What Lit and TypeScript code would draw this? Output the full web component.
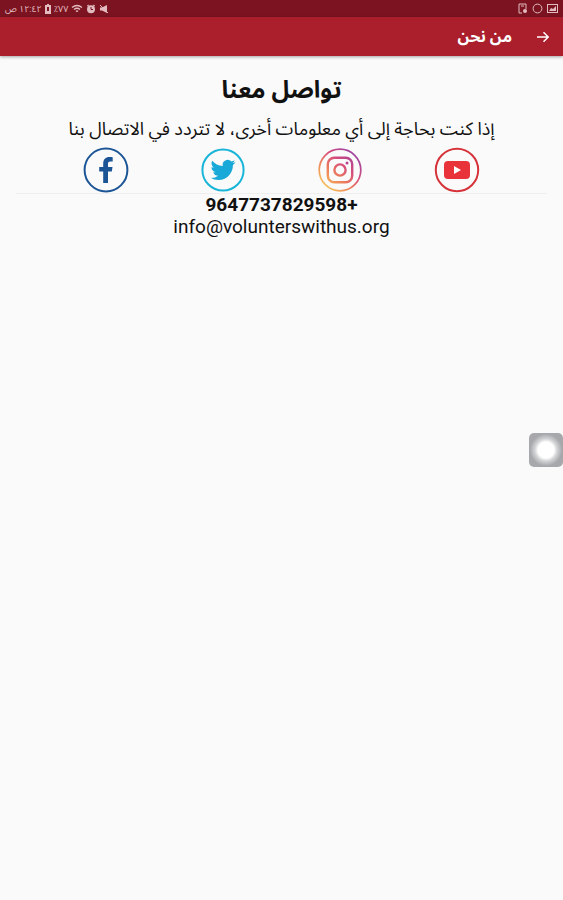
import { LitElement, html, css, svg } from "lit";
import { customElement } from "lit/decorators.js";

const facebook = svg`
  <circle cx="23" cy="23" r="21.4" fill="none" stroke="#1b5596" stroke-width="2"/>
  <path fill="#1b5596" d="M20.2 36V24.6h-4v-4.5h4v-3.4c0-4.300 2.500-6.600 6.200-6.600 1.500 0 2.600.1 3.300.2v4.300h-2.400c-1.800 0-2.300.9-2.300 2.300v3.200h4.500l-.7 4.500h-3.800V36z"/>`;

const twitter = svg`
  <circle cx="23" cy="23" r="20.600" fill="none" stroke="#19b5d8" stroke-width="2"/>
  <path fill="#19a9d8" transform="translate(10.500 10.500) scale(1.040)" d="M23.953 4.570a10 10 0 01-2.825.775 4.958 4.958 0 002.163-2.723c-.951.555-2.005.959-3.127 1.184a4.920 4.920 0 00-8.384 4.482C7.690 8.095 4.067 6.130 1.640 3.162a4.822 4.822 0 00-.666 2.475c0 1.710.870 3.213 2.188 4.096a4.904 4.904 0 01-2.228-.616v.060a4.923 4.923 0 003.946 4.827 4.996 4.996 0 01-2.212.085 4.936 4.936 0 004.604 3.417 9.867 9.867 0 01-6.102 2.105c-.390 0-.779-.023-1.170-.067a13.995 13.995 0 007.557 2.209c9.053 0 13.998-7.496 13.998-13.985 0-.210 0-.420-.015-.630A9.935 9.935 0 0024 4.590z"/>`;

const instagram = svg`
  <defs>
    <linearGradient id="ig" gradientUnits="userSpaceOnUse" x1="8" y1="40" x2="38" y2="6">
      <stop offset="0" stop-color="#f6c35c"/>
      <stop offset=".35" stop-color="#ec7d5c"/>
      <stop offset=".65" stop-color="#d44a7c"/>
      <stop offset="1" stop-color="#9a45a4"/>
    </linearGradient>
  </defs>
  <g fill="none" stroke="url(#ig)">
    <circle cx="23" cy="23" r="20.800" stroke-width="1.700"/>
    <rect x="10.800" y="10.800" width="24.400" height="24.400" rx="6.500" stroke-width="2.400"/>
    <circle cx="23" cy="23" r="5.600" stroke-width="2.400"/>
  </g>
  <circle cx="30" cy="16" r="1.500" fill="#b8438f"/>`;

const youtube = svg`
  <circle cx="23" cy="23" r="21.200" fill="none" stroke="#d6323a" stroke-width="2"/>
  <rect x="10" y="14" width="26" height="18" rx="4" fill="#e8333b"/>
  <path d="M20 19v8l7-4z" fill="#fff"/>`;

const links = [
  { name: "YouTube", art: youtube },
  { name: "Instagram", art: instagram },
  { name: "Twitter", art: twitter },
  { name: "Facebook", art: facebook },
];

@customElement("app-root")
export class AppRoot extends LitElement {
  static styles = css`
    :host {
      display: block;
      position: relative;
      min-height: 100vh;
      background: #fafafa;
      color: #111;
      font-family: Roboto, "Noto Sans Arabic", "Noto Sans", "DejaVu Sans", sans-serif;
    }
    svg { display: block; }
    .status {
      display: flex;
      justify-content: space-between;
      align-items: center;
      height: 17px;
      padding: 0 5px;
      background: #7b1420;
      color: #e3bcc0;
      font-size: 9px;
      line-height: 16px;
    }
    .group { display: flex; align-items: center; gap: 4px; }
    .info { gap: 3px; }
    .bar {
      display: flex;
      align-items: center;
      gap: 24px;
      height: 39px;
      padding: 0 13px;
      background: #ab1e2b;
      color: #fff;
      box-shadow: 0 1px 3px rgba(0, 0, 0, .35);
    }
    .back {
      padding: 0;
      border: 0;
      background: none;
      color: inherit;
    }
    .title { margin: 0; font-size: 16px; line-height: 32px; font-weight: 700; }
    main { padding: 16px 16px 0; text-align: center; }
    h2 { margin: 0; font-size: 24px; line-height: 36px; font-weight: 700; }
    p { margin: 0; }
    .lead { font-size: 18px; line-height: 24px; padding: 9px 0 6px; }
    .social {
      display: grid;
      grid-template-columns: repeat(4, 1fr);
      justify-items: center;
      padding: 0 32px;
      border-bottom: 1px solid #eee;
    }
    .contact { font-size: 19px; line-height: 22px; }
    .contact a { color: inherit; text-decoration: none; }
    .phone { font-weight: 700; }
    .assist {
      position: absolute;
      right: 0;
      top: 433px;
      width: 34px;
      height: 34px;
      padding: 0;
      border: 0;
      border-radius: 5px;
      background: radial-gradient(circle, #fff 0 8px, #d4d5d7 11px, #a6a8ab 16px);
    }
  `;

  render() {
    return html`
      <div dir="rtl">
        <div class="status">
          <div class="group">
            <svg width="11" height="11" viewBox="0 0 11 11"><path fill="currentColor" fill-rule="evenodd" d="M0 1h11v9H0zM1 2v7h9V2zM2 8l2-3 2 1 3-3v5z"/></svg>
            <svg width="11" height="11" viewBox="0 0 11 11"><circle cx="5.500" cy="5.500" r="4.400" fill="none" stroke="currentColor"/></svg>
            <svg width="11" height="11" viewBox="0 0 11 11"><path fill="none" stroke="currentColor" d="M5 10H2V1h7v5M4 3h3"/><circle cx="8" cy="8" r="2" fill="currentColor"/></svg>
          </div>
          <div class="group info">
            <svg width="10" height="10" viewBox="0 0 10 10"><path fill="currentColor" d="M1 3.500h2L8 1v8L3 6.500H1z"/><path d="M1 1l8 8" stroke="currentColor"/></svg>
            <svg width="10" height="10" viewBox="0 0 10 10"><circle cx="5" cy="5.300" r="4" fill="currentColor"/><path d="M1 2l2-1M9 2L7 1" stroke="currentColor"/><path d="M5 3v2.500h2" fill="none" stroke="#7b1420"/></svg>
            <svg width="12" height="10" viewBox="0 0 12 10"><path fill="none" stroke="currentColor" stroke-width="1.300" d="M1 3.500q5-4 10 0M3 5.500q3-2.500 6 0M5 7.500q1-1 2 0"/></svg>
            <span>٧٧٪</span>
            <svg width="6" height="10" viewBox="0 0 6 10"><path fill="currentColor" d="M2 0h2v1h2v9H0V1h2z"/><path fill="#7b1420" d="M2 3h2v4H2z"/></svg>
            <span>١٢:٤٢ ص</span>
          </div>
        </div>
        <header class="bar">
          <button class="back" aria-label="رجوع">
            <svg width="14" height="14" viewBox="0 0 14 14"><path d="M1 7h11M7.500 2.300L12.200 7l-4.700 4.700" fill="none" stroke="currentColor" stroke-width="1.500"/></svg>
          </button>
          <h1 class="title">من نحن</h1>
        </header>
        <main>
          <h2>تواصل معنا</h2>
          <p class="lead">إذا كنت بحاجة إلى أي معلومات أخرى، لا تتردد في الاتصال بنا</p>
          <nav class="social">
            ${links.map(
              (l) => html`<a href="#" aria-label=${l.name}>
                <svg width="46" height="46" viewBox="0 0 46 46">${l.art}</svg>
              </a>`
            )}
          </nav>
          <p class="contact phone"><a href="tel:+9647737829598">+9647737829598</a></p>
          <p class="contact"><a href="mailto:info@volunterswithus.org">info@volunterswithus.org</a></p>
        </main>
        <button class="assist" aria-label="مساعد"></button>
      </div>
    `;
  }
}
